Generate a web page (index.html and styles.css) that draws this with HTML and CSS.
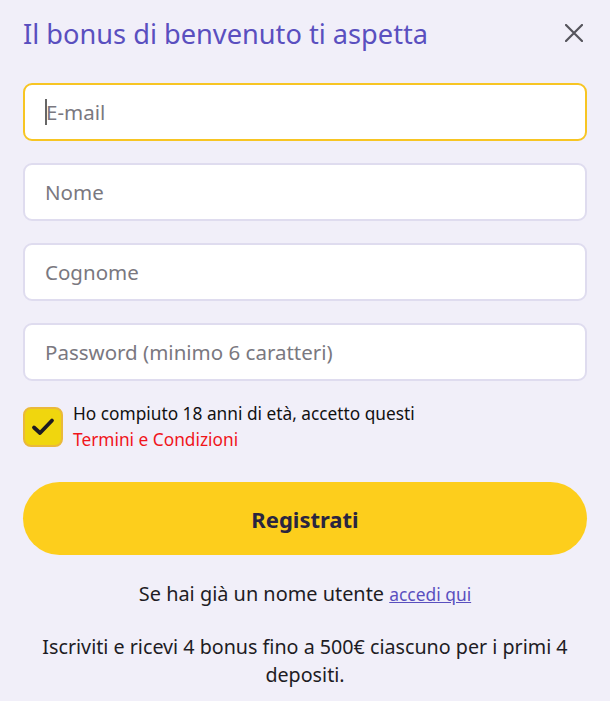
FILE: index.html
```html
<!DOCTYPE html>
<html lang="it">
<head>
<meta charset="utf-8">
<link rel="stylesheet" href="styles.css">
</head>
<body>
<div class="modal">
  <div class="header">
    <h1 class="title">Il bonus di benvenuto ti aspetta</h1>
    <button class="close" aria-label="Chiudi">
      <svg width="18" height="18" viewBox="0 0 18 18"><path d="M1 1L17 17M17 1L1 17" stroke="#55545c" stroke-width="2.2" stroke-linecap="round"/></svg>
    </button>
  </div>
  <form class="form">
    <div class="field focused"><span class="caret"></span><span class="ph">E-mail</span></div>
    <div class="field"><span class="ph">Nome</span></div>
    <div class="field"><span class="ph">Cognome</span></div>
    <div class="field"><span class="ph">Password (minimo 6 caratteri)</span></div>
    <div class="consent">
      <span class="check">
        <svg width="24" height="20" viewBox="0 0 24 20"><path d="M3 10.5L9 16L21 3.5" fill="none" stroke="#1d1a22" stroke-width="3.8" stroke-linecap="round" stroke-linejoin="round"/></svg>
      </span>
      <div class="consent-text">Ho compiuto 18 anni di età, accetto questi<br><a class="terms">Termini e Condizioni</a></div>
    </div>
    <button type="button" class="submit">Registrati</button>
  </form>
  <p class="login">Se hai già un nome utente <a class="link">accedi qui</a></p>
  <p class="promo">Iscriviti e ricevi 4 bonus fino a 500€ ciascuno per i primi 4 depositi.</p>
</div>
</body>
</html>
```
FILE: styles.css
```css
html, body {
  margin: 0;
  padding: 0;
  background: #f1eff9;
}
body {
  font-family: "Noto Sans", "Open Sans", sans-serif;
  color: #1e1c24;
}
.modal {
  padding: 13px 23px 0 23px;
}
.header {
  display: flex;
  align-items: center;
  justify-content: space-between;
  height: 40px;
}
.title {
  margin: 0;
  font-size: 27.2px;
  font-weight: 400;
  color: #5a4fbf;
  letter-spacing: 0;
}
.close {
  background: none;
  border: 0;
  padding: 0;
  margin-right: 4px;
  width: 18px;
  height: 18px;
  display: flex;
}
.form {
  display: flex;
  flex-direction: column;
  margin-top: 30px;
}
.field {
  box-sizing: border-box;
  height: 58px;
  background: #fff;
  border: 2px solid #dfdcef;
  border-radius: 9px;
  display: flex;
  align-items: center;
  padding-left: 20px;
  margin-bottom: 22px;
  font-size: 20.5px;
  color: #7a7880;
}
.field.focused {
  border-color: #f7c523;
}
.caret {
  width: 2px;
  height: 26px;
  background: #666;
  margin-right: -1px;
}
.consent {
  display: flex;
  align-items: flex-start;
  gap: 10px;
  margin-top: 2px;
}
.check {
  box-sizing: border-box;
  width: 40px;
  height: 40px;
  margin-top: 2px;
  background: #f0d60e;
  border: 2px solid #eab93a;
  border-radius: 8px;
  display: flex;
  align-items: center;
  justify-content: center;
}
.consent-text {
  font-size: 17.3px;
  line-height: 26px;
  color: #111;
  margin-top: -4px;
}
.terms {
  color: #f0151b;
}
.submit {
  margin-top: 29px;
  height: 73px;
  border: 0;
  border-radius: 37px;
  background: #fdce1c;
  font-family: "Noto Sans", "Open Sans", sans-serif;
  font-weight: 700;
  font-size: 22px;
  color: #2a2540;
}
.login {
  margin: 25px 0 0;
  text-align: center;
  font-size: 19.9px;
  line-height: 28px;
}
.link {
  color: #5a4fbf;
  text-decoration: underline;
  font-size: 17.4px;
}
.promo {
  margin: 25px 0 0;
  text-align: center;
  font-size: 19.7px;
  line-height: 28px;
}
```
